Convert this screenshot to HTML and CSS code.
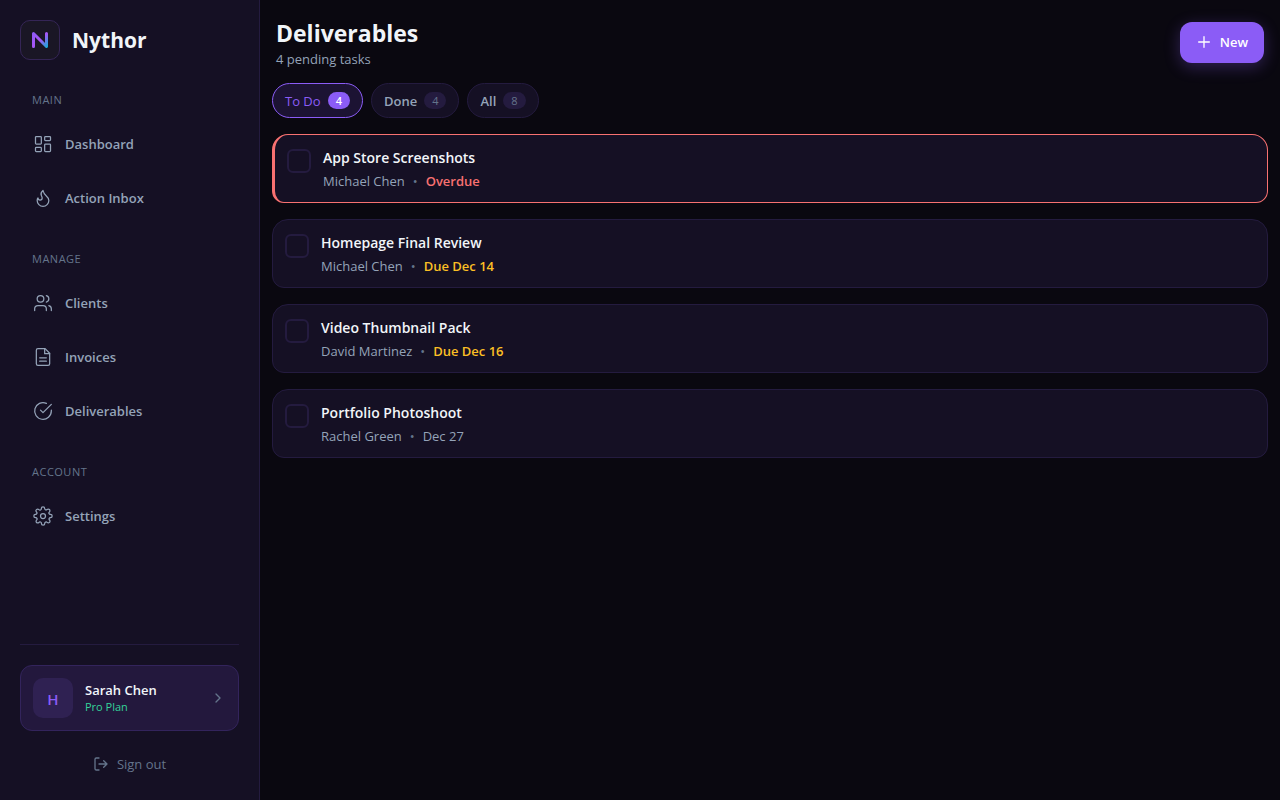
FILE: index.html
```html
<!DOCTYPE html>
<html lang="en">
<head>
  <meta charset="UTF-8">
  <title>Nythor - Deliverables</title>
  <meta name="viewport" content="width=device-width, initial-scale=1.0">
  <link rel="stylesheet" href="styles.css">
</head>
<body>
  <div class="app">
    <aside class="sidebar">
      <div class="brand">
        <div class="brand-logo">
          <svg width="24" height="24" viewBox="0 0 24 24" fill="none">
            <defs>
              <linearGradient id="logoGradient" x1="4" y1="4" x2="20" y2="20" gradientUnits="userSpaceOnUse">
                <stop offset="0" stop-color="#8b5cf6"/>
                <stop offset="0.5" stop-color="#a855f7"/>
                <stop offset="1" stop-color="#06b6d4"/>
              </linearGradient>
            </defs>
            <path d="M5.500 18.500V5.500l13 13V5.500" stroke="url(#logoGradient)" stroke-width="3" stroke-linecap="round" stroke-linejoin="round"/>
          </svg>
        </div>
        <span class="brand-name">Nythor</span>
      </div>

      <nav class="nav">
        <div class="nav-section">
          <div class="nav-label">MAIN</div>
          <a class="nav-item" href="#dashboard">
            <svg class="icon" viewBox="0 0 24 24"><rect x="3" y="3" width="7" height="9" rx="1"/><rect x="14" y="3" width="7" height="5" rx="1"/><rect x="14" y="12" width="7" height="9" rx="1"/><rect x="3" y="16" width="7" height="5" rx="1"/></svg>
            Dashboard
          </a>
          <a class="nav-item" href="#inbox">
            <svg class="icon" viewBox="0 0 24 24"><path d="M8.5 14.5A2.5 2.5 0 0 0 11 12c0-1.38-.5-2-1-3-1.072-2.143-.224-4.054 2-6 .5 2.5 2 4.9 4 6.5 2 1.6 3 3.5 3 5.5a7 7 0 1 1-14 0c0-1.153.433-2.294 1-3a2.5 2.5 0 0 0 2.5 2.5z"/></svg>
            Action Inbox
          </a>
        </div>
        <div class="nav-section">
          <div class="nav-label">MANAGE</div>
          <a class="nav-item" href="#clients">
            <svg class="icon" viewBox="0 0 24 24"><path d="M16 21v-2a4 4 0 0 0-4-4H6a4 4 0 0 0-4 4v2"/><circle cx="9" cy="7" r="4"/><path d="M22 21v-2a4 4 0 0 0-3-3.87M16 3.13a4 4 0 0 1 0 7.75"/></svg>
            Clients
          </a>
          <a class="nav-item" href="#invoices">
            <svg class="icon" viewBox="0 0 24 24"><path d="M14.5 2H6a2 2 0 0 0-2 2v16a2 2 0 0 0 2 2h12a2 2 0 0 0 2-2V7.5z"/><path d="M14 2v6h6M16 13H8M16 17H8"/></svg>
            Invoices
          </a>
          <a class="nav-item" href="#deliverables">
            <svg class="icon" viewBox="0 0 24 24"><path d="M22 11.08V12a10 10 0 1 1-5.93-9.14"/><path d="m9 11 3 3L22 4"/></svg>
            Deliverables
          </a>
        </div>
        <div class="nav-section">
          <div class="nav-label">ACCOUNT</div>
          <a class="nav-item" href="#settings">
            <svg class="icon" viewBox="0 0 24 24"><circle cx="12" cy="12" r="3"/><path d="M19.4 15a1.65 1.65 0 0 0 .33 1.82l.06.06a2 2 0 1 1-2.83 2.83l-.06-.06a1.65 1.65 0 0 0-2.8 1.17V21a2 2 0 1 1-4 0v-.09A1.65 1.65 0 0 0 7.18 19.73l-.06.06a2 2 0 1 1-2.83-2.83l.06-.06A1.65 1.65 0 0 0 3.09 14H3a2 2 0 1 1 0-4h.09A1.65 1.65 0 0 0 4.27 7.18l-.06-.06a2 2 0 1 1 2.83-2.83l.06.06A1.65 1.65 0 0 0 10 3.09V3a2 2 0 1 1 4 0v.09a1.65 1.65 0 0 0 2.82 1.18l.06-.06a2 2 0 1 1 2.83 2.83l-.06.06A1.65 1.65 0 0 0 20.91 10H21a2 2 0 1 1 0 4h-.09a1.65 1.65 0 0 0-1.51 1z"/></svg>
            Settings
          </a>
        </div>
      </nav>

      <div class="sidebar-footer">
        <a class="user-card" href="#profile">
          <span class="avatar">H</span>
          <span class="user-info">
            <span class="user-name">Sarah Chen</span>
            <span class="user-plan">Pro Plan</span>
          </span>
          <svg class="icon icon-sm" viewBox="0 0 24 24"><path d="m9 18 6-6-6-6"/></svg>
        </a>
        <button class="sign-out" type="button">
          <svg class="icon icon-sm" viewBox="0 0 24 24"><path d="M9 21H5a2 2 0 0 1-2-2V5a2 2 0 0 1 2-2h4M16 17l5-5-5-5M21 12H9"/></svg>
          Sign out
        </button>
      </div>
    </aside>

    <main class="main">
      <header class="page-header">
        <div>
          <h1>Deliverables</h1>
          <p class="subtitle">4 pending tasks</p>
        </div>
        <button class="btn-new" type="button">
          <svg class="icon icon-sm" viewBox="0 0 24 24"><path d="M12 4v16M4 12h16"/></svg>
          New
        </button>
      </header>

      <div class="filters">
        <button class="filter active" type="button">To Do <span class="count">4</span></button>
        <button class="filter" type="button">Done <span class="count">4</span></button>
        <button class="filter" type="button">All <span class="count">8</span></button>
      </div>

      <div class="task-list">
        <div class="task overdue">
          <input type="checkbox" id="task1">
          <div class="task-body">
            <label class="task-title" for="task1">App Store Screenshots</label>
            <div class="task-meta"><span>Michael Chen</span><span class="dot">•</span><span class="due">Overdue</span></div>
          </div>
        </div>
        <div class="task soon">
          <input type="checkbox" id="task2">
          <div class="task-body">
            <label class="task-title" for="task2">Homepage Final Review</label>
            <div class="task-meta"><span>Michael Chen</span><span class="dot">•</span><span class="due">Due Dec 14</span></div>
          </div>
        </div>
        <div class="task soon">
          <input type="checkbox" id="task3">
          <div class="task-body">
            <label class="task-title" for="task3">Video Thumbnail Pack</label>
            <div class="task-meta"><span>David Martinez</span><span class="dot">•</span><span class="due">Due Dec 16</span></div>
          </div>
        </div>
        <div class="task">
          <input type="checkbox" id="task4">
          <div class="task-body">
            <label class="task-title" for="task4">Portfolio Photoshoot</label>
            <div class="task-meta"><span>Rachel Green</span><span class="dot">•</span><span class="due">Dec 27</span></div>
          </div>
        </div>
      </div>
    </main>
  </div>
</body>
</html>
```
FILE: styles.css
```css
* {
  box-sizing: border-box;
}
body {
  margin: 0;
  background: #0a0810;
  color: #f1f5f9;
  font-family: 'Segoe UI', 'Open Sans', sans-serif;
  font-size: 13px;
  line-height: 20px;
}
button {
  font: inherit;
  cursor: pointer;
}
a {
  color: inherit;
  text-decoration: none;
}
.app {
  display: flex;
  min-height: 100vh;
}
.icon {
  width: 20px;
  height: 20px;
  flex-shrink: 0;
  fill: none;
  stroke: currentColor;
  stroke-width: 1.5;
  stroke-linecap: round;
  stroke-linejoin: round;
}
.icon-sm {
  width: 16px;
  height: 16px;
  stroke-width: 2;
}

/* Sidebar */
.sidebar {
  display: flex;
  flex-direction: column;
  width: 260px;
  flex-shrink: 0;
  padding: 20px 20px 15px;
  background: #151024;
  border-right: 1px solid #241b3f;
}
.brand {
  display: flex;
  align-items: center;
  gap: 12px;
  margin-bottom: 32px;
}
.brand-logo {
  display: flex;
  align-items: center;
  justify-content: center;
  width: 40px;
  height: 40px;
  background: #1a1625;
  border: 1px solid #352556;
  border-radius: 10px;
}
.brand-name {
  font-size: 21px;
  font-weight: 700;
  line-height: 28px;
}
.nav {
  flex: 1;
}
.nav-section {
  margin-bottom: 28px;
}
.nav-label {
  padding: 0 12px;
  margin-bottom: 11px;
  font-size: 11px;
  font-weight: 500;
  line-height: 16px;
  letter-spacing: 0.5px;
  color: #64748b;
}
.nav-item {
  display: flex;
  align-items: center;
  gap: 12px;
  height: 50px;
  padding: 0 13px;
  margin-bottom: 4px;
  color: #94a3b8;
  font-weight: 600;
}
.sidebar-footer {
  border-top: 1px solid #241b3f;
  padding-top: 20px;
}
.user-card {
  display: flex;
  align-items: center;
  gap: 12px;
  padding: 12px;
  background: #23183d;
  border: 1px solid #33245c;
  border-radius: 12px;
}
.user-card .icon {
  color: #64748b;
}
.avatar {
  width: 40px;
  height: 40px;
  border-radius: 10px;
  background: #2f2152;
  color: #8b5cf6;
  font-size: 15px;
  font-weight: 600;
  line-height: 42px;
  text-align: center;
}
.user-info {
  display: flex;
  flex-direction: column;
  flex: 1;
}
.user-name {
  font-weight: 600;
  line-height: 18px;
}
.user-plan {
  font-size: 11px;
  font-weight: 500;
  line-height: 16px;
  color: #34d399;
}
.sign-out {
  display: flex;
  align-items: center;
  justify-content: center;
  gap: 8px;
  width: 100%;
  margin-top: 12px;
  padding: 11px;
  background: none;
  border: none;
  color: #64748b;
}

/* Main */
.main {
  flex: 1;
  padding: 16px 12px;
}
.page-header {
  display: flex;
  align-items: center;
  justify-content: space-between;
  padding: 0 4px;
  margin-bottom: 15px;
}
h1 {
  margin: 0;
  font-size: 23px;
  font-weight: 700;
  line-height: 34px;
}
.subtitle {
  margin: 0;
  line-height: 18px;
  color: #94a3b8;
}
.btn-new {
  display: flex;
  align-items: center;
  gap: 8px;
  height: 41px;
  padding: 0 16px;
  background: #8b5cf6;
  border: none;
  border-radius: 12px;
  color: #fff;
  font-weight: 600;
  box-shadow: 0 4px 16px rgba(139, 92, 246, 0.3);
}
.filters {
  display: flex;
  gap: 8px;
  margin-bottom: 16px;
}
.filter {
  display: flex;
  align-items: center;
  gap: 7px;
  height: 35px;
  padding: 0 12px;
  background: #151024;
  border: 1px solid #241b3f;
  border-radius: 18px;
  color: #94a3b8;
  font-weight: 600;
}
.count {
  padding: 0 8px;
  background: #241b3f;
  border-radius: 10px;
  color: #64748b;
  font-size: 11px;
  font-weight: 500;
  line-height: 17px;
}
.filter.active {
  background: #1c1333;
  border-color: #8b5cf6;
  color: #8b5cf6;
  font-weight: 500;
}
.filter.active .count {
  background: #8b5cf6;
  color: #fff;
  font-weight: 600;
}
.task-list {
  display: flex;
  flex-direction: column;
  gap: 16px;
}
.task {
  display: flex;
  align-items: flex-start;
  gap: 12px;
  padding: 12px;
  background: #151024;
  border: 1px solid #241b3f;
  border-radius: 16px 16px 12px 12px;
}
.task input {
  appearance: none;
  width: 24px;
  height: 24px;
  margin: 2px 0 0;
  border: 2px solid #241b3f;
  border-radius: 6px;
}
.task input:checked {
  background: #8b5cf6;
}
.task-title {
  display: block;
  font-size: 14px;
  font-weight: 600;
  line-height: 21px;
}
.task-meta {
  display: flex;
  gap: 8px;
  margin-top: 4px;
  line-height: 18px;
  color: #94a3b8;
}
.dot {
  color: #64748b;
}
.task.soon .due {
  color: #fbbf24;
  font-weight: 600;
}
.task.overdue {
  border-color: #f87171;
  border-left-width: 3px;
}
.task.overdue .due {
  color: #f87171;
  font-weight: 600;
}
```
